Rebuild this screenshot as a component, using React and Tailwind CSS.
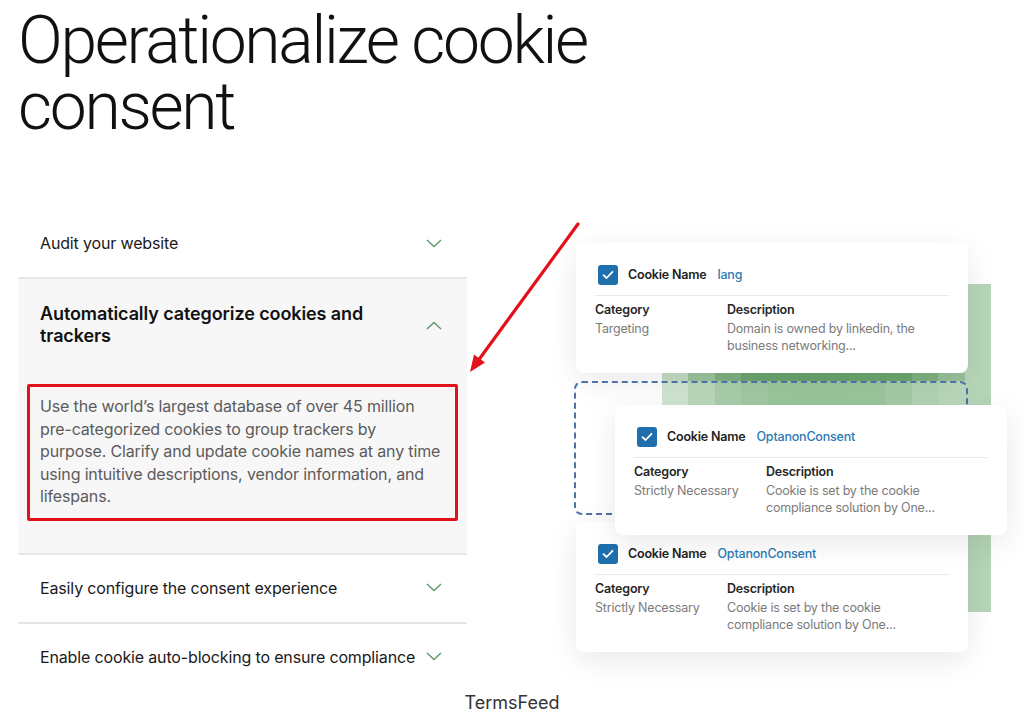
import React from 'react';

const items = [
  { title: 'Audit your website' },
  {
    title: 'Automatically categorize cookies and trackers',
    open: true,
    body: [
      'Use the world\u2019s largest database of over 45 million',
      'pre-categorized cookies to group trackers by',
      'purpose. Clarify and update cookie names at any time',
      'using intuitive descriptions, vendor information, and',
      'lifespans.',
    ],
  },
  { title: 'Easily configure the consent experience' },
  { title: 'Enable cookie auto-blocking to ensure compliance' },
];

function Chevron({ up }) {
  return (
    <svg width="16" height="9" viewBox="0 0 16 9" fill="none" className="shrink-0">
      <path
        d={up ? 'M1 8L8 1.5L15 8' : 'M1 1L8 7.5L15 1'}
        stroke="#5f9466"
        strokeWidth="1.3"
      />
    </svg>
  );
}

function Check() {
  return (
    <div className="w-[20px] h-[20px] rounded-[3px] bg-[#1f6fad] flex items-center justify-center shrink-0">
      <svg width="12" height="10" viewBox="0 0 12 10" fill="none">
        <path d="M1.5 5.2L4.6 8L10.5 1.8" stroke="#fff" strokeWidth="1.8" strokeLinecap="round" strokeLinejoin="round" />
      </svg>
    </div>
  );
}

function CookieCard({ name, category, desc, className }) {
  return (
    <div className={`absolute w-[392px] h-[130px] bg-white rounded-lg shadow-[0_8px_30px_rgba(0,0,0,0.09)] px-[19px] pt-[22px] tracking-[-0.2px] ${className}`}>
      <div className="flex items-center pl-[3px]">
        <Check />
        <span className="ml-[10px] text-[12.5px] font-semibold text-[#222]">Cookie Name</span>
        <span className="ml-[11px] text-[12.5px] font-medium text-[#2b7bb4]">{name}</span>
      </div>
      <div className="mt-[10px] h-px bg-[#e8e8e8]" />
      <div className="mt-[5px] flex text-[12.5px] leading-[17px]">
        <div className="w-[132px] shrink-0">
          <div className="font-semibold text-[#262626] leading-[18px]">Category</div>
          <div className="mt-px text-[#7b7b7b]">{category}</div>
        </div>
        <div className="w-[215px]">
          <div className="font-semibold text-[#262626] leading-[18px]">Description</div>
          <div className="mt-px text-[#7b7b7b]">{desc}</div>
        </div>
      </div>
    </div>
  );
}

function HeatMap() {
  const dark = ['#c5dcc5', '#9cc49d', '#80b382', '#6ca66f', '#6aa46e', '#6aa46e', '#6aa46e', '#6ca66f', '#6da770', '#80b382', '#98c29a', '#b6d6b8'];
  const light = ['#d2e5d2', '#bcd9bd', '#aacfab', '#a1caa3', '#9cc79e', '#9bc69d', '#9bc69d', '#9cc79e', '#a5cca7', '#b2d4b4', '#bad8bb', '#b6d6b8'];
  const edges = [0, 26, 53, 79, 106, 133, 160, 187, 223, 250, 276, 303, 329];
  return (
    <svg width="329" height="328" viewBox="0 0 329 328" className="absolute left-[195px] top-[74px]">
      <rect width="329" height="328" fill="#b6d6b8" />
      {dark.map((c, i) => (
        <rect key={'d' + i} x={edges[i]} y="89" width={edges[i + 1] - edges[i]} height="8" fill={c} />
      ))}
      {light.map((c, i) => (
        <rect key={'l' + i} x={edges[i]} y="97" width={edges[i + 1] - edges[i]} height="26" fill={c} />
      ))}
    </svg>
  );
}

export default function App() {
  return (
    <div className="w-[1024px] bg-white text-[#1a1a1a] font-['Inter','Noto_Sans',sans-serif]">
      <h1 className="pt-[8px] pl-[18px] text-[66px] leading-[66px] font-light tracking-[-0.035em] text-[#111] font-['Roboto',sans-serif]">
        <span className="block">Operationalize cookie</span>
        <span className="block">consent</span>
      </h1>

      <div className="mt-[70px] flex">
        <div className="ml-[18px] w-[449px] shrink-0">
          {items.map((it, i) =>
            it.open ? (
              <div key={i} className="bg-[#f7f7f7] border-b-2 border-[#e6e6e6] pb-[32px]">
                <div className="flex items-center justify-between pl-[22px] pr-[25px] pt-[24px]">
                  <div className="w-[345px] text-[18px] leading-[22px] font-semibold text-[#111] tracking-[-0.1px]">{it.title}</div>
                  <Chevron up />
                </div>
                <div className="mx-[9px] mt-[37px] border-[3px] border-[#e3111b] rounded-[2px] pl-[10px] pr-[12px] pt-[8px] pb-[10px]">
                  <p className="text-[16px] leading-[22.5px] text-[#5b5b5b] tracking-[-0.15px]">
                    {it.body.map((line, j) => (
                      <span key={j} className="block whitespace-nowrap">{line}</span>
                    ))}
                  </p>
                </div>
              </div>
            ) : (
              <div
                key={i}
                className={`flex items-center justify-between pl-[22px] pr-[25px] pt-[22px] pb-[23px] ${i === items.length - 1 ? '' : 'border-b-2 border-[#e6e6e6]'}`}
              >
                <span className="text-[16px] leading-[22px] whitespace-nowrap tracking-[-0.15px]">{it.title}</span>
                <Chevron />
              </div>
            )
          )}
        </div>

        <div className="relative flex-1 h-[482px]">
          <HeatMap />
          <CookieCard
            className="left-[109px] top-[33px]"
            name="lang"
            category="Targeting"
            desc="Domain is owned by linkedin, the business networking..."
          />
          <CookieCard
            className="left-[109px] top-[312px]"
            name="OptanonConsent"
            category="Strictly Necessary"
            desc="Cookie is set by the cookie compliance solution by One..."
          />
          <div className="absolute left-[107px] top-[171px] w-[394px] h-[134px] border-2 border-dashed border-[#4d72a8] rounded-lg" />
          <CookieCard
            className="left-[148px] top-[195px]"
            name="OptanonConsent"
            category="Strictly Necessary"
            desc="Cookie is set by the cookie compliance solution by One..."
          />
          <svg width="130" height="170" viewBox="0 0 130 170" className="absolute left-0 top-0">
            <line x1="111" y1="14" x2="12" y2="149.5" stroke="#e3111b" strokeWidth="3.2" strokeLinecap="round" />
            <polygon points="3,162 18,152.5 7,144.5" fill="#e3111b" />
          </svg>
        </div>
      </div>

      <div className="pt-[2px] text-center text-[18px] leading-[18px] text-[#333] pb-[8px]">TermsFeed</div>
    </div>
  );
}
